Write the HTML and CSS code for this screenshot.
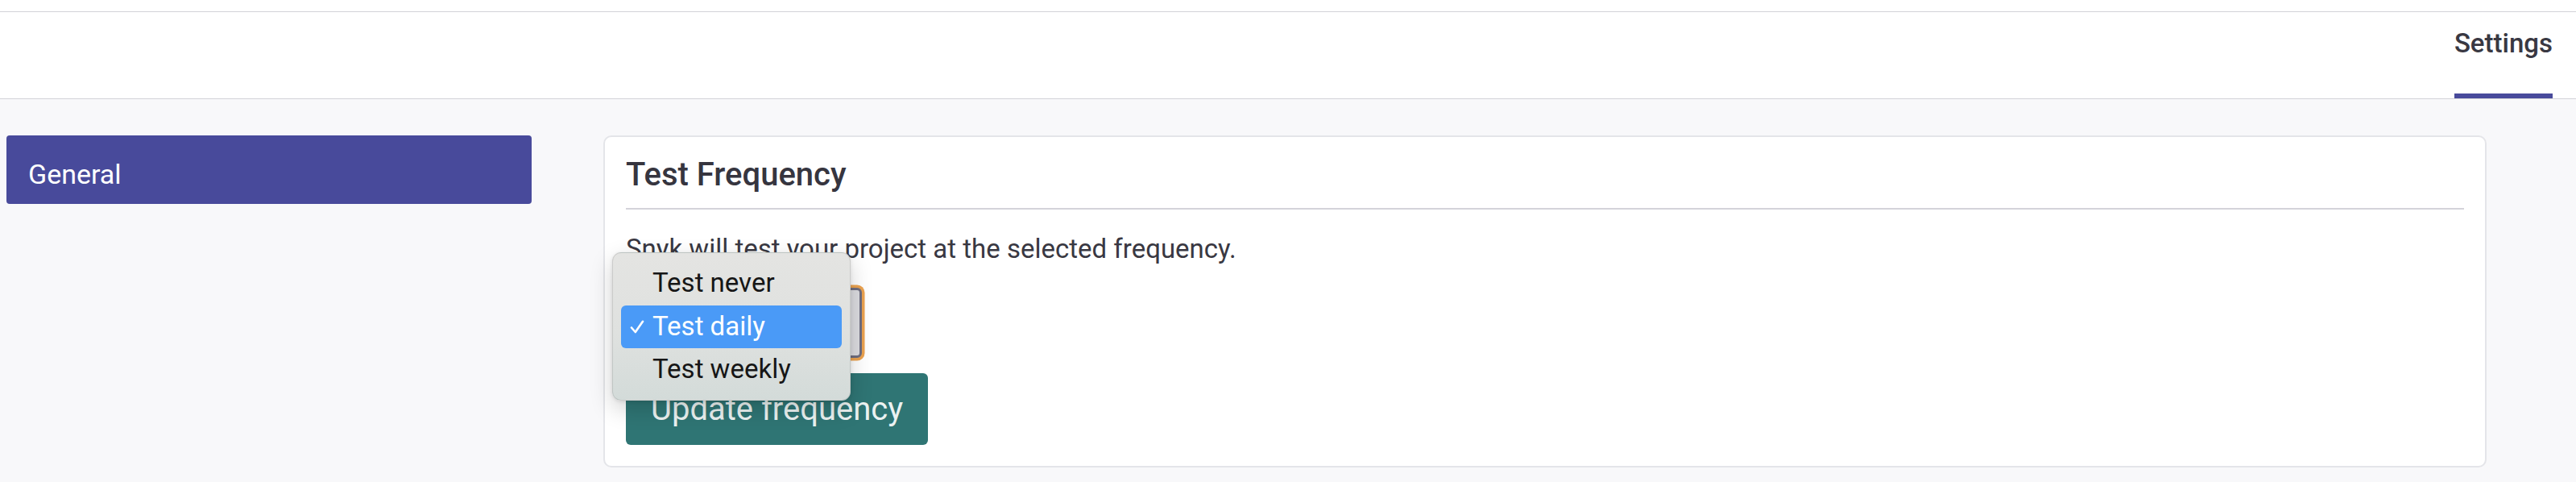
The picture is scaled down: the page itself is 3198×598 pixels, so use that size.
FILE: index.html
```html
<!DOCTYPE html>
<html lang="en">
<head>
<meta charset="utf-8">
<title>Settings</title>
<link rel="stylesheet" href="styles.css">
</head>
<body>
<div class="top-strip"></div>
<header class="topbar">
  <nav class="tabs">
    <a class="tab tab-active">Settings</a>
  </nav>
</header>
<div class="layout">
  <aside class="sidebar">
    <a class="side-item side-item-active">General</a>
  </aside>
  <main class="content">
    <section class="card">
      <h2 class="card-title">Test Frequency</h2>
      <p class="card-text">Snyk will test your project at the selected frequency.</p>
      <div class="select-wrap">
        <div class="select"></div>
        <ul class="popup">
          <li class="option">Test never</li>
          <li class="option option-selected">
            <svg class="check" width="18" height="17" viewBox="0 0 18 17"><path d="M2 9.5 L6.8 15 L16 1.8" fill="none" stroke="#ffffff" stroke-width="2.6" stroke-linecap="round" stroke-linejoin="round"/></svg>
            Test daily
          </li>
          <li class="option">Test weekly</li>
        </ul>
      </div>
      <button class="btn-primary">Update frequency</button>
    </section>
  </main>
</div>
</body>
</html>
```

FILE: styles.css
```css
html, body {
  margin: 0;
  padding: 0;
}
body {
  background: #f8f8fa;
  font-family: Roboto, "Liberation Sans", sans-serif;
  color: #393842;
  width: 3198px;
  height: 598px;
  overflow: hidden;
}
.top-strip {
  height: 14px;
  background: #ffffff;
}
.topbar {
  background: #ffffff;
  border-top: 1px solid #d3d3d8;
  border-bottom: 1px solid #d3d3d8;
  height: 107px;
  display: flex;
  justify-content: flex-end;
  padding-right: 29px;
}
.tabs {
  display: flex;
  height: 100%;
}
.tab {
  box-sizing: border-box;
  height: 107px;
  padding-top: 19px;
  font-size: 33px;
  line-height: 40px;
  font-weight: 500;
  color: #393842;
  border-bottom: 6px solid transparent;
}
.tab-active {
  border-bottom-color: #484a9b;
}
.layout {
  display: grid;
  grid-template-columns: 652px 1fr;
  column-gap: 89px;
  padding: 45px 111px 0 8px;
  align-items: start;
}
.sidebar {
  display: flex;
  flex-direction: column;
}
.side-item {
  display: block;
  box-sizing: border-box;
  height: 85px;
  padding: 18px 27px 7px;
  font-size: 34px;
  line-height: 60px;
  color: #ffffff;
  border-radius: 4px;
}
.side-item-active {
  background: #484a9b;
}
.card {
  background: #ffffff;
  border: 2px solid #e4e5e9;
  border-radius: 10px;
  padding: 23px 26px 26px;
}
.card-title {
  margin: 0;
  font-size: 40px;
  line-height: 48px;
  font-weight: 500;
  color: #36353f;
  padding-bottom: 17px;
  border-bottom: 2px solid #d4d3da;
}
.card-text {
  margin: 29px 0 0;
  font-size: 33px;
  line-height: 40px;
  color: #393842;
}
.select-wrap {
  position: relative;
  margin-top: 28px;
  width: 293px;
}
.select {
  box-sizing: border-box;
  height: 87px;
  border: 3px solid #6f6e7f;
  border-radius: 6px;
  background: #dcdce0;
  box-shadow: 0 0 0 3.5px #eba24f;
}
.popup {
  position: absolute;
  left: -17px;
  top: -44px;
  width: 296px;
  box-sizing: border-box;
  margin: 0;
  padding: 11px 10px 10px;
  list-style: none;
  border-radius: 11px;
  border: 1px solid rgba(0, 0, 0, 0.10);
  background: linear-gradient(180deg, #e4e4e2 0%, #dfe1df 55%, #d3dbd9 100%);
  box-shadow: 0 10px 28px rgba(0, 0, 0, 0.18), 0 1px 4px rgba(0, 0, 0, 0.10);
}
.option {
  position: relative;
  height: 53.5px;
  box-sizing: border-box;
  padding: 0 0 2.5px 39px;
  font-size: 33px;
  line-height: 51px;
  color: #161616;
  border-radius: 6px;
}
.option-selected {
  background: #4a9af7;
  color: #ffffff;
}
.check {
  position: absolute;
  left: 11px;
  top: 18px;
}
.btn-primary {
  display: block;
  margin-top: 19px;
  height: 89px;
  padding: 0 31px;
  border: 0;
  border-radius: 6px;
  background: #2f7574;
  color: rgba(255, 255, 255, 0.92);
  font-family: Roboto, "Liberation Sans", sans-serif;
  font-size: 40px;
  font-weight: 400;
  line-height: 89px;
}
```
